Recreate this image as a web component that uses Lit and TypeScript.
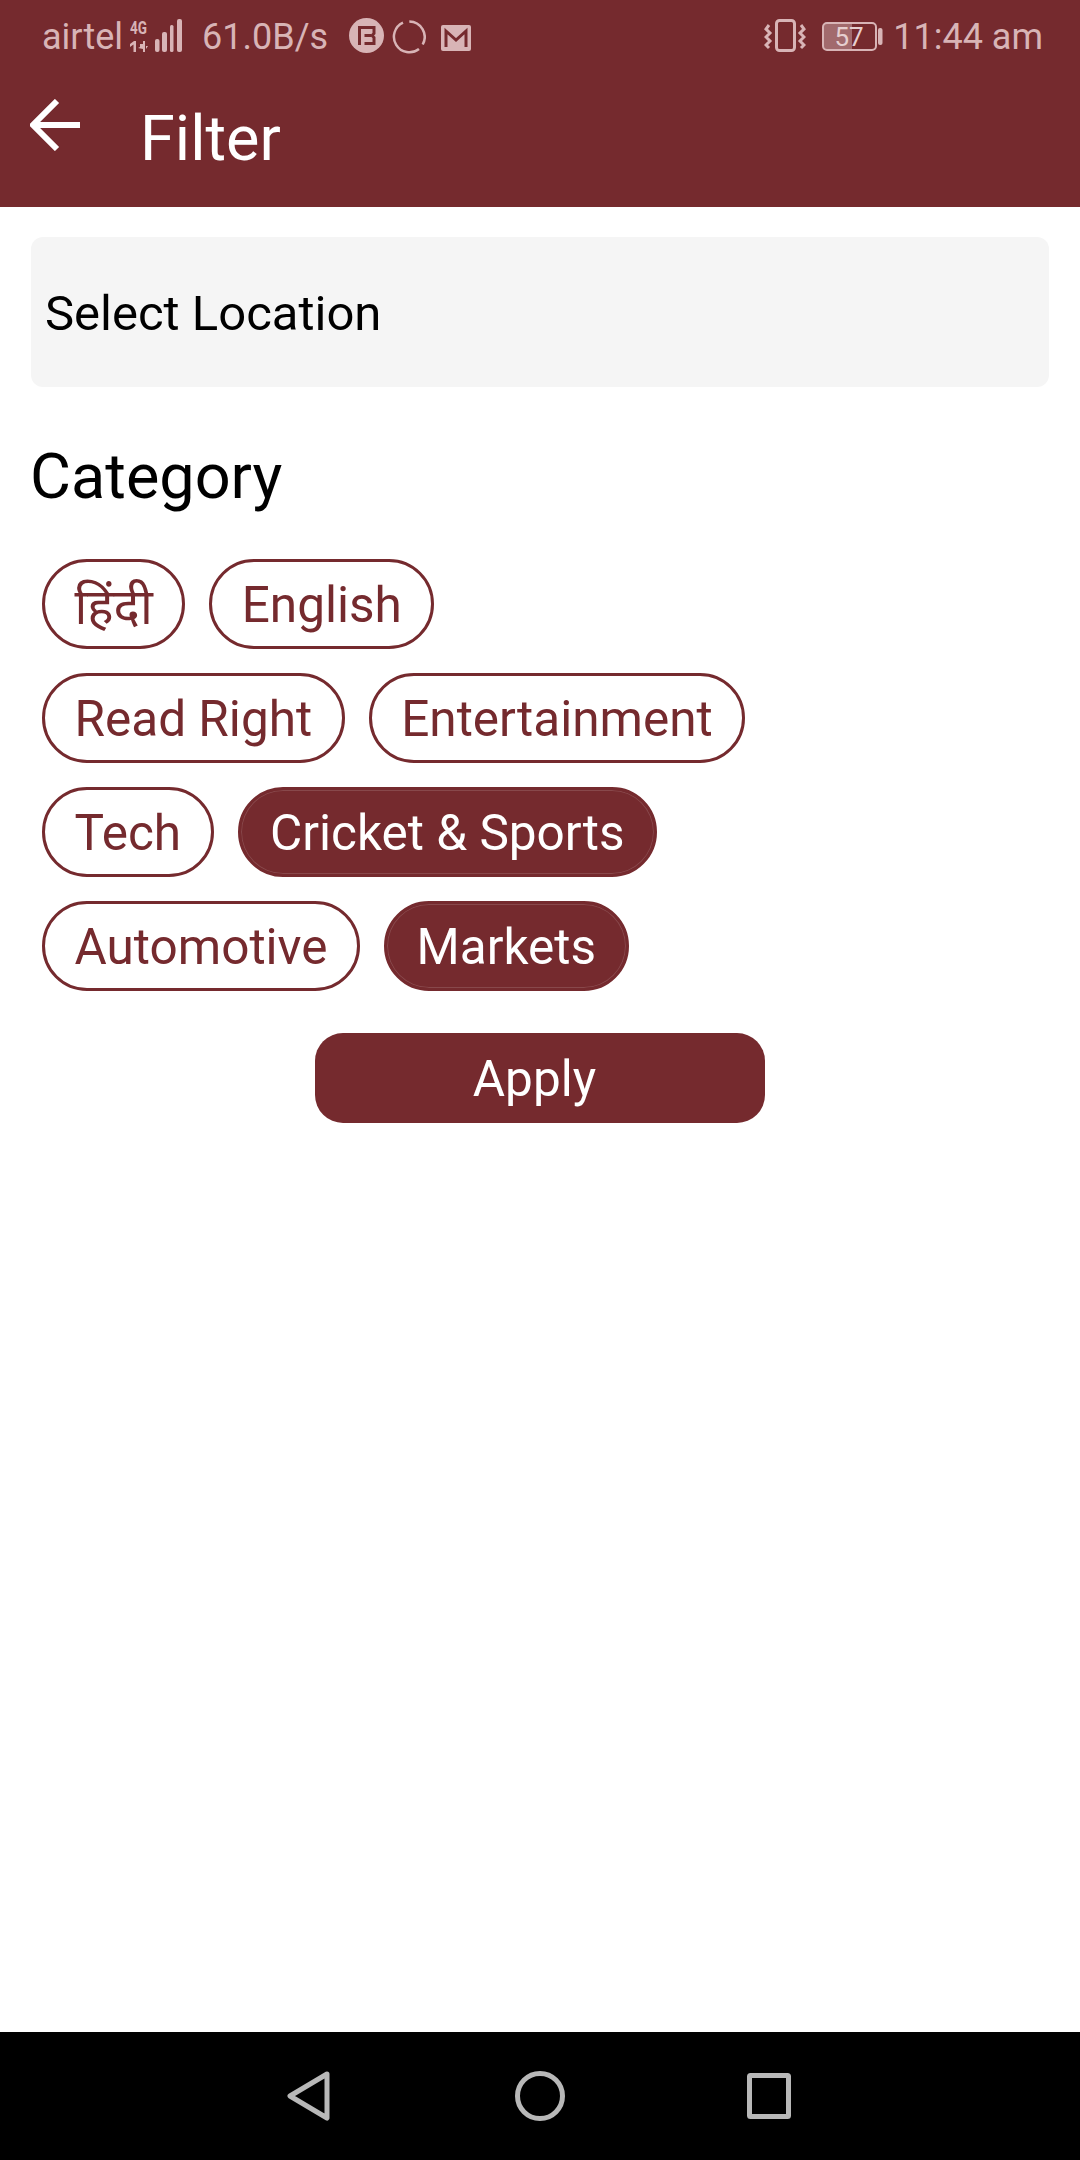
import { LitElement, html, css } from 'lit';
import { customElement } from 'lit/decorators.js';

const CHIP_ROWS = [
  [{ label: 'हिंदी' }, { label: 'English' }],
  [{ label: 'Read Right' }, { label: 'Entertainment' }],
  [{ label: 'Tech' }, { label: 'Cricket & Sports', on: true }],
  [{ label: 'Automotive' }, { label: 'Markets', on: true }],
];

@customElement('app-root')
export class AppRoot extends LitElement {
  static styles = css`
    :host {
      display: flex;
      flex-direction: column;
      width: 1080px;
      height: 2160px;
      background: #fff;
      font-family: Roboto, "Noto Sans", "Liberation Sans", sans-serif;
    }
    svg {
      display: block;
      flex: none;
    }
    .header {
      height: 207px;
      background: #752a2e;
      color: #fff;
    }
    .status {
      display: flex;
      align-items: center;
      height: 74px;
      padding: 0 37px 0 42px;
      color: #d8b4b6;
      font-size: 36px;
    }
    .net-type {
      width: 52px;
      margin: 0 0 4px 7px;
    }
    .speed {
      margin-left: 20px;
    }
    .ic-b {
      margin: 0 0 4px 21px;
    }
    .ic-ring {
      margin-left: 8px;
    }
    .ic-mail {
      margin: 2px 0 0 15px;
    }
    .spacer {
      flex: 1;
    }
    .ic-vibrate {
      margin-bottom: 2px;
    }
    .battery {
      margin-left: 16px;
    }
    .time {
      margin-left: 9px;
    }
    .toolbar {
      display: flex;
      align-items: flex-start;
      padding: 25px 0 0 30px;
    }
    .title {
      margin: 3px 0 0 60px;
      font-size: 63px;
      font-weight: 400;
    }
    .content {
      flex: 1;
      padding: 30px 31px 0;
    }
    .location {
      display: flex;
      align-items: center;
      box-sizing: border-box;
      height: 150px;
      padding: 2px 0 0 14px;
      background: #f5f5f5;
      border-radius: 12px;
      font-size: 49px;
      color: #000;
    }
    .heading {
      margin: 55px 0 0 -1px;
      font-size: 63px;
      line-height: 70px;
      font-weight: 400;
      color: #000;
    }
    .chips {
      display: flex;
      flex-direction: column;
      gap: 24px;
      margin-top: 47px;
      padding-left: 11px;
    }
    .chip-row {
      display: flex;
      gap: 24px;
    }
    .chip {
      display: flex;
      align-items: center;
      box-sizing: border-box;
      height: 90px;
      padding: 2px 29.500px 0;
      border: 3px solid #752a2e;
      border-radius: 45px;
      font-size: 49.500px;
      color: #752a2e;
    }
    .chip.on {
      background: #752a2e;
      color: #fff;
      box-shadow: inset 0 0 0 1px rgba(255, 255, 255, 0.14);
    }
    .apply-row {
      display: flex;
      justify-content: center;
      margin-top: 42px;
    }
    .apply {
      width: 450px;
      height: 90px;
      padding: 2px 0 0;
      border: 0;
      border-radius: 28px;
      background: #752a2e;
      color: #fff;
      font: inherit;
      font-size: 49.500px;
      text-indent: -11px;
    }
    .nav {
      height: 128px;
      background: #000;
    }
    .nav-icons {
      display: flex;
      align-items: center;
      justify-content: center;
      height: 128px;
      padding-right: 2px;
    }
    .nav-home {
      margin-left: 184px;
    }
    .nav-recent {
      margin-left: 182px;
    }
  `;

  render() {
    return html`
      <div class="header">
        <div class="status">
          <span>airtel</span>
          <svg class="net-type" width="52" height="40" viewBox="0 -4 52 40" fill="#d8b4b6">
            <text x="0" y="15" font-size="19" font-weight="700" font-family="Roboto" textLength="17" lengthAdjust="spacingAndGlyphs">4G</text>
            <path d="M0 25l4-3h2v11H3.500V25.500L0 28zM10 25h3v-3h2v11h-2v-3l-5-1 2-1zM16 27h2l-2 3z"/>
            <rect x="25" y="20" width="4.500" height="13" rx="2"/>
            <rect x="32" y="13" width="5" height="20" rx="2"/>
            <rect x="40" y="6" width="3.500" height="27" rx="1.500"/>
            <rect x="47" y="0" width="5" height="33" rx="2"/>
          </svg>
          <span class="speed">61.0B/s</span>
          <svg class="ic-b" width="35" height="35" viewBox="0 0 35 35">
            <circle cx="17.500" cy="17.500" r="17.500" fill="#d8b4b6"/>
            <path d="M10.500 27V9.500H25v6l-2 2 2 2v6H15.500M15.500 17.500H22" fill="none" stroke="#752a2e" stroke-width="3"/>
          </svg>
          <svg class="ic-ring" width="34" height="36" viewBox="0 0 34 36" fill="none" stroke="#d8b4b6" stroke-width="2.500">
            <path d="M17.300 2.500A15.500 15.500 0 0 1 30.700 25.500M11 3.700A15.500 15.500 0 1 0 27 30"/>
          </svg>
          <svg class="ic-mail" width="30" height="26" viewBox="0 0 30 26">
            <rect width="30" height="26" rx="2" fill="#d8b4b6"/>
            <path d="M5 22V6l10 9 10-9v16" fill="none" stroke="#752a2e" stroke-width="3"/>
          </svg>
          <div class="spacer"></div>
          <svg class="ic-vibrate" width="42" height="34" viewBox="0 0 42 34" fill="none" stroke="#d8b4b6" stroke-width="3">
            <rect x="12.500" y="1.500" width="18" height="30" rx="3"/>
            <path d="M5 6L2 10l4 4-4 4 4 4-4 4 3 3M37 6l3 4-4 4 4 4-4 4 4 4-3 3"/>
          </svg>
          <svg class="battery" width="62" height="30" viewBox="0 0 62 30">
            <rect x="2" y="2" width="28" height="26" fill="#a26a6d"/>
            <rect x="1" y="1" width="53" height="27" rx="4" fill="none" stroke="#d8b4b6" stroke-width="2"/>
            <rect x="56" y="6" width="4.500" height="17" rx="2" fill="#d8b4b6"/>
            <text x="27" y="24" text-anchor="middle" font-size="26" font-family="Roboto" fill="#e6cfd0">57</text>
          </svg>
          <span class="time">11:44 am</span>
        </div>
        <div class="toolbar">
          <svg width="50" height="52" viewBox="0 0 50 52" fill="none" stroke="#fff" stroke-width="6">
            <path d="M50 26H4M27 2L3 26l24 24"/>
          </svg>
          <h1 class="title">Filter</h1>
        </div>
      </div>

      <div class="content">
        <div class="location">Select Location</div>
        <h2 class="heading">Category</h2>
        <div class="chips">
          ${CHIP_ROWS.map(
            (row) => html`
              <div class="chip-row">
                ${row.map(
                  (c) => html`<div class="chip ${c.on ? 'on' : ''}">${c.label}</div>`
                )}
              </div>
            `
          )}
        </div>
        <div class="apply-row">
          <button class="apply">Apply</button>
        </div>
      </div>

      <div class="nav">
        <div class="nav-icons">
          <svg width="44" height="50" viewBox="0 0 44 50" fill="none" stroke="#b8b8b8" stroke-width="5" stroke-linejoin="round">
            <path d="M40 3L3 25l37 22z"/>
          </svg>
          <svg class="nav-home" width="50" height="50" viewBox="0 0 50 50" fill="none" stroke="#b8b8b8" stroke-width="5">
            <circle cx="25" cy="25" r="22.500"/>
          </svg>
          <svg class="nav-recent" width="44" height="46" viewBox="0 0 44 46" fill="none" stroke="#b8b8b8" stroke-width="5" stroke-linejoin="round">
            <rect x="2.500" y="2.500" width="39" height="41" rx="1"/>
          </svg>
        </div>
      </div>
    `;
  }
}
